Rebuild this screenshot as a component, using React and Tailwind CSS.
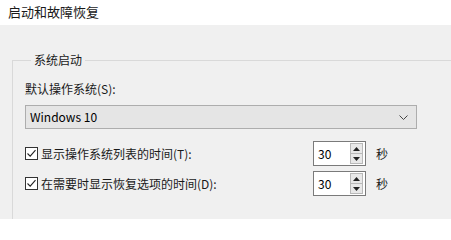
import { useState } from "react";

const font = { fontFamily: '"Noto Sans CJK SC", "Noto Sans", sans-serif' };

const Check = ({ checked, onToggle, label }) => (
  <label className="flex items-center gap-[3px] cursor-default" onClick={onToggle}>
    <span className="w-[13px] h-[13px] border border-[#333333] bg-white flex items-center justify-center">
      {checked && (
        <svg width="11" height="11" viewBox="0 0 11 11">
          <path d="M1.5 5.5 L4.2 8.2 L9.5 2.2" fill="none" stroke="#222" strokeWidth="1.1" />
        </svg>
      )}
    </span>
    <span className="text-[12px] text-[#1a1a1a]">{label}</span>
  </label>
);

const Spin = ({ value, setValue }) => (
  <div className="flex items-center gap-[10px]">
    <div className="w-[53px] h-[25px] border border-[#7a7a7a] bg-white flex items-center">
      <span className="flex-1 pl-[4px] text-[12px] text-black">{value}</span>
      <div className="w-[13px] h-[21px] mr-[2px] flex flex-col border border-[#b8b8b8]">
        <button
          className="flex-1 bg-[#e8e8e8] border-b border-[#b8b8b8] flex items-center justify-center"
          onClick={() => setValue(value + 1)}
        >
          <svg width="7" height="4" viewBox="0 0 7 4">
            <path d="M0 4 L3.5 0 L7 4 Z" fill="#222" />
          </svg>
        </button>
        <button
          className="flex-1 bg-[#e8e8e8] flex items-center justify-center"
          onClick={() => setValue(Math.max(0, value - 1))}
        >
          <svg width="7" height="4" viewBox="0 0 7 4">
            <path d="M0 0 L3.5 4 L7 0 Z" fill="#222" />
          </svg>
        </button>
      </div>
    </div>
    <span className="text-[12px] text-[#1a1a1a]">秒</span>
  </div>
);

export default function App() {
  const [showList, setShowList] = useState(true);
  const [showRecovery, setShowRecovery] = useState(true);
  const [listTime, setListTime] = useState(30);
  const [recoveryTime, setRecoveryTime] = useState(30);

  return (
    <div className="w-[451px] h-[219px] overflow-hidden bg-[#f0f0f0]" style={font}>
      <div className="h-[25px] bg-white pl-[8px] pt-[2px] text-[13px] text-[#1a1a1a] leading-[20px]">
        启动和故障恢复
      </div>
      <fieldset className="mt-[27px] ml-[12px] mr-[-10px] h-[200px] border-t border-l border-[#d9d9d9] pl-[12px]">
        <legend className="ml-[6px] px-[3px] text-[12px] text-[#1a1a1a] leading-[16px]">系统启动</legend>
        <div className="mt-[13px] text-[12px] text-[#1a1a1a] leading-[16px]">默认操作系统(S):</div>
        <div className="mt-[8px] w-[392px] h-[24px] bg-[#e5e5e5] border border-[#adadad] flex items-center justify-between pl-[4px] pr-[8px]">
          <span className="text-[12px] text-black">Windows 10</span>
          <svg width="9" height="5" viewBox="0 0 9 5">
            <path d="M0.5 0.5 L4.5 4.5 L8.5 0.5" fill="none" stroke="#444" strokeWidth="1" />
          </svg>
        </div>
        <div className="mt-[12px] w-[363px] flex items-center justify-between">
          <Check checked={showList} onToggle={() => setShowList(!showList)} label="显示操作系统列表的时间(T):" />
          <Spin value={listTime} setValue={setListTime} />
        </div>
        <div className="mt-[5px] w-[363px] flex items-center justify-between">
          <Check checked={showRecovery} onToggle={() => setShowRecovery(!showRecovery)} label="在需要时显示恢复选项的时间(D):" />
          <Spin value={recoveryTime} setValue={setRecoveryTime} />
        </div>
      </fieldset>
    </div>
  );
}
